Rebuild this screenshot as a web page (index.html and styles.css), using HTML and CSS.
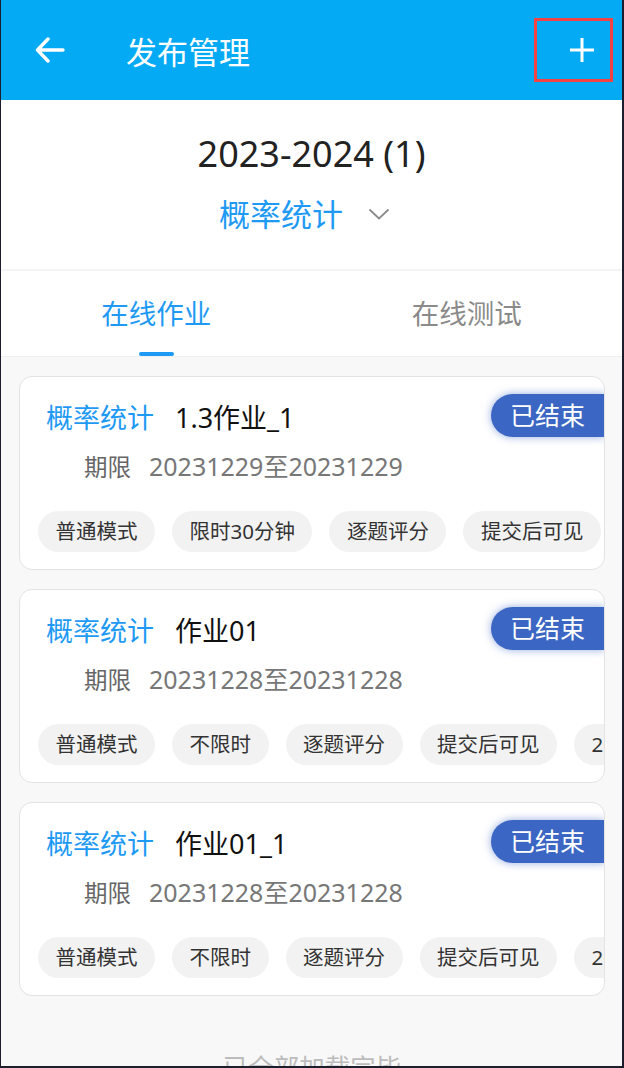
FILE: index.html
```html
<!DOCTYPE html>
<html lang="zh-CN">
<head>
    <meta charset="UTF-8">
    <meta name="viewport" content="width=device-width, initial-scale=1.0">
    <title>发布管理</title>
    <link rel="stylesheet" href="styles.css">
</head>
<body>
    <div class="page">
        <!-- 顶部导航 -->
        <div class="header">
            <span class="back">
                <svg width="30" height="26" viewBox="0 0 30 26"><path d="M28 13H3M13 2L2.5 13L13 24" fill="none" stroke="#fff" stroke-width="3.4" stroke-linecap="round" stroke-linejoin="round"/></svg>
            </span>
            <span class="title">发布管理</span>
            <span class="add">
                <svg width="26" height="26" viewBox="0 0 26 26"><path d="M13 1V25M1 13H25" stroke="#fff" stroke-width="3"/></svg>
            </span>
        </div>

        <!-- 学期与课程 -->
        <div class="term">
            <div class="term-year">2023-2024 (1)</div>
            <div class="term-course">
                <span>概率统计</span>
                <svg width="22" height="12" viewBox="0 0 22 12"><path d="M1.5 1.5L11 10.5L20.5 1.5" fill="none" stroke="#8a8a8a" stroke-width="1.8"/></svg>
            </div>
        </div>

        <div class="tabs">
            <div class="tab active">在线作业</div>
            <div class="tab">在线测试</div>
        </div>

        <!-- 列表 -->
        <div class="list">
            <div class="card">
                <div class="card-title"><span class="course">概率统计</span><span class="name">1.3作业_1</span></div>
                <div class="card-date"><span class="label">期限</span><span>20231229至20231229</span></div>
                <div class="tags">
                    <span class="tag">普通模式</span>
                    <span class="tag">限时30分钟</span>
                    <span class="tag">逐题评分</span>
                    <span class="tag">提交后可见</span>
                    <span class="tag">20分</span>
                </div>
                <span class="status">已结束</span>
            </div>

            <div class="card">
                <div class="card-title"><span class="course">概率统计</span><span class="name">作业01</span></div>
                <div class="card-date"><span class="label">期限</span><span>20231228至20231228</span></div>
                <div class="tags">
                    <span class="tag">普通模式</span>
                    <span class="tag">不限时</span>
                    <span class="tag">逐题评分</span>
                    <span class="tag">提交后可见</span>
                    <span class="tag">20分</span>
                </div>
                <span class="status">已结束</span>
            </div>

            <div class="card">
                <div class="card-title"><span class="course">概率统计</span><span class="name">作业01_1</span></div>
                <div class="card-date"><span class="label">期限</span><span>20231228至20231228</span></div>
                <div class="tags">
                    <span class="tag">普通模式</span>
                    <span class="tag">不限时</span>
                    <span class="tag">逐题评分</span>
                    <span class="tag">提交后可见</span>
                    <span class="tag">20分</span>
                </div>
                <span class="status">已结束</span>
            </div>

            <div class="list-end">已全部加载完毕</div>
        </div>
    </div>
</body>
</html>
```

FILE: styles.css
```css
* {
    margin: 0;
    padding: 0;
    box-sizing: border-box;
}

body {
    font-family: "Noto Sans", "Noto Sans CJK SC", sans-serif;
    background: #1d1e2d;
    height: 1068px;
    overflow: hidden;
}

.page {
    margin: 0 2px 2px 1px;
    height: 1066px;
    background-color: #f8f8f8;
    overflow: hidden;
}

.header {
    height: 100px;
    background-color: #05aaf5;
    display: flex;
    align-items: center;
    color: #fff;
}

.back {
    display: flex;
    margin-left: 34px;
}

.title {
    margin-left: 61px;
    font-size: 31px;
    flex: 1;
}

.add {
    width: 79px;
    height: 64px;
    margin-right: 9px;
    border: 3px solid #f44242;
    display: flex;
    align-items: center;
    justify-content: center;
    padding-left: 16px;
}

.term {
    background-color: #fff;
    height: 171px;
    padding-top: 29px;
    text-align: center;
    border-bottom: 2px solid #f4f4f4;
}

.term-year {
    font-size: 36px;
    color: #222;
    line-height: 50px;
}

.term-course {
    display: flex;
    justify-content: center;
    align-items: center;
    gap: 25px;
    margin-top: 10px;
    font-size: 31px;
    color: #1e9af5;
    line-height: 50px;
    padding-right: 14px;
}

.tabs {
    display: flex;
    height: 86px;
    background-color: #fff;
    border-bottom: 1px solid #efefef;
}

.tab {
    flex: 1;
    text-align: center;
    font-size: 27.5px;
    color: #8a8a8a;
    line-height: 86px;
    position: relative;
}

.tab.active {
    color: #1e9af5;
}

.tab.active::after {
    content: "";
    position: absolute;
    left: 50%;
    bottom: 0;
    width: 35px;
    height: 4px;
    margin-left: -17px;
    border-radius: 2px;
    background-color: #1e9af5;
}

.list {
    padding: 19px 17px 0 18px;
    display: flex;
    flex-direction: column;
    gap: 19px;
}

.card {
    position: relative;
    height: 194px;
    background-color: #fff;
    border: 1px solid #e3e3e3;
    border-radius: 13px;
    padding: 21px 0 0 26px;
    overflow: hidden;
}

.card-title {
    font-size: 27px;
    line-height: 40px;
}

.course {
    color: #1e9af5;
    margin-right: 21px;
}

.name {
    color: #111;
}

.card-date {
    margin-top: 12px;
    padding-left: 38px;
    font-size: 25px;
    line-height: 32px;
    color: #777;
}

.card-date .label {
    color: #666;
    font-size: 23.5px;
    margin-right: 18px;
}

.tags {
    display: flex;
    gap: 17px;
    margin-top: 28px;
    margin-left: -8px;
    white-space: nowrap;
}

.tag {
    flex-shrink: 0;
    height: 41px;
    line-height: 41px;
    padding: 0 17.5px;
    border-radius: 21px;
    background-color: #f2f2f2;
    font-size: 20.5px;
    color: #333;
}

.status {
    position: absolute;
    top: 17px;
    right: -1px;
    width: 114px;
    height: 43px;
    line-height: 43px;
    padding-left: 19px;
    border-radius: 22px 0 0 22px;
    background-color: #3c66c3;
    box-shadow: 0 0 8px rgba(60, 102, 195, 0.55);
    color: #fff;
    font-size: 25px;
}

.list-end {
    margin-top: 32px;
    text-align: center;
    font-size: 25.5px;
    line-height: 40px;
    color: #bcbcbc;
}
```
